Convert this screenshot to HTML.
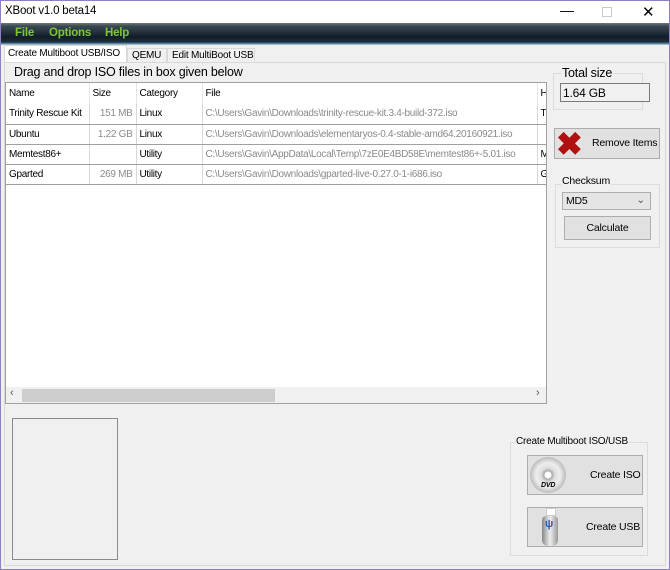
<!DOCTYPE html>
<html><head><style>
*{margin:0;padding:0;box-sizing:border-box}
body{width:670px;height:570px;position:relative;background:#f0f0f0;font-family:"Liberation Sans",sans-serif;font-size:10.5px;letter-spacing:-0.2px;color:#000;overflow:hidden}
.a{position:absolute;white-space:nowrap}
.btn{position:absolute;background:#e1e1e1;border:1px solid #adadad}
td{height:20px;border-right:1px solid #d8d8d8;border-bottom:1px solid #a0a0a0;padding:0 3px;white-space:nowrap;overflow:hidden;font-size:10px;letter-spacing:-0.3px}
.g{color:#8a8a8a}
</style></head><body>
<div class="a" style="left:0;top:0;width:670px;height:570px;border:1px solid #8f7fc8"></div>
<div class="a" style="left:1px;top:1px;width:668px;height:22px;background:#fff"></div>
<div class="a" style="left:5px;top:5px;font-size:11.5px">XBoot v1.0 beta14</div>
<div class="a" style="left:560px;top:2px;font-size:14px">&#8212;</div>
<div class="a" style="left:602px;top:7px;width:10px;height:10px;border:1px solid #ccc"></div>
<div class="a" style="left:642px;top:3px;font-size:15px">&#10005;</div>
<div class="a" style="left:1px;top:23px;width:668px;height:22px;background:linear-gradient(#777 0,#3a4a55 3px,#111d26 14px,#1c3040 19px,#6a9ab8 21px,#d0d8dc 22px)"></div>
<div class="a" style="left:15px;top:27px;font-size:11.5px;font-weight:bold;color:#7dc63a">File</div>
<div class="a" style="left:49px;top:27px;font-size:11.5px;font-weight:bold;color:#7dc63a">Options</div>
<div class="a" style="left:105px;top:27px;font-size:11.5px;font-weight:bold;color:#7dc63a">Help</div>
<!-- tabs -->
<div class="a" style="left:4px;top:45px;width:123px;height:18px;background:#fff;border:1px solid #d9d9d9;border-bottom:none;padding:2px 3px;font-size:10px">Create Multiboot USB/ISO</div>
<div class="a" style="left:127px;top:48px;width:40px;height:15px;background:#f0f0f0;border:1px solid #d9d9d9;padding:1px 4px;font-size:10px">QEMU</div>
<div class="a" style="left:167px;top:48px;width:88px;height:15px;background:#f0f0f0;border:1px solid #d9d9d9;padding:1px 4px;font-size:10px">Edit MultiBoot USB</div>
<div class="a" style="left:4px;top:62px;width:662px;height:504px;border:1px solid #d9d9d9;background:#f0f0f0"></div>
<div class="a" style="left:14px;top:65px;font-size:12.5px">Drag and drop ISO files in box given below</div>
<!-- list -->
<div class="a" style="left:5px;top:82px;width:542px;height:322px;background:#fff;border:1px solid #a0a0a0;overflow:hidden">
<table style="border-collapse:collapse;width:560px;table-layout:fixed">
<col style="width:83px"><col style="width:47px"><col style="width:66px"><col style="width:335px"><col style="width:29px">
<tr><td style="height:21px;border-bottom:none;border-right-color:#e5e5e5">Name</td><td style="border-bottom:none;border-right-color:#e5e5e5">Size</td><td style="border-bottom:none;border-right-color:#e5e5e5">Category</td><td style="border-bottom:none;border-right-color:#e5e5e5">File</td><td style="border-bottom:none">H</td></tr>
<tr><td>Trinity Rescue Kit</td><td class="g" style="text-align:right">151 MB</td><td>Linux</td><td class="g">C:\Users\Gavin\Downloads\trinity-rescue-kit.3.4-build-372.iso</td><td>T</td></tr>
<tr><td>Ubuntu</td><td class="g" style="text-align:right">1.22 GB</td><td>Linux</td><td class="g">C:\Users\Gavin\Downloads\elementaryos-0.4-stable-amd64.20160921.iso</td><td></td></tr>
<tr><td>Memtest86+</td><td></td><td>Utility</td><td class="g">C:\Users\Gavin\AppData\Local\Temp\7zE0E4BD58E\memtest86+-5.01.iso</td><td>M</td></tr>
<tr><td>Gparted</td><td class="g" style="text-align:right">269 MB</td><td>Utility</td><td class="g">C:\Users\Gavin\Downloads\gparted-live-0.27.0-1-i686.iso</td><td>G</td></tr>
</table>
<div class="a" style="left:0;top:304px;width:540px;height:16px;background:#f0f0f0"></div>
<div class="a" style="left:16px;top:306px;width:253px;height:13px;background:#cdcdcd"></div>
<div class="a" style="left:4px;top:304px;font-size:11px;color:#555">&#8249;</div>
<div class="a" style="left:530px;top:304px;font-size:11px;color:#555">&#8250;</div>
</div>
<!-- right -->
<div class="a" style="left:553px;top:73px;width:90px;height:37px;border:1px solid #dcdcdc"></div>
<div class="a" style="left:561px;top:66px;font-size:12.5px;background:#f0f0f0;padding:0 1px">Total size</div>
<div class="a" style="left:560px;top:83px;width:90px;height:19px;border:1px solid #7a7a7a;background:#f0f0f0;font-size:12px;padding:2px 2px">1.64 GB</div>
<div class="btn" style="left:554px;top:128px;width:106px;height:31px"></div>
<div class="a" style="left:556px;top:129px;font-size:32px;line-height:30px;color:#b01010;font-weight:bold">&#10006;</div>
<div class="a" style="left:592px;top:137px">Remove Items</div>
<div class="a" style="left:555px;top:184px;width:105px;height:64px;border:1px solid #dcdcdc"></div>
<div class="a" style="left:561px;top:175px;background:#f0f0f0;padding:0 1px">Checksum</div>
<div class="a" style="left:562px;top:192px;width:89px;height:18px;border:1px solid #adadad;background:#e5e5e5;padding:2px 3px">MD5<span style="position:absolute;right:5px;top:1px;color:#555">&#8964;</span></div>
<div class="btn" style="left:564px;top:216px;width:87px;height:24px;text-align:center;padding-top:5px">Calculate</div>
<!-- bottom -->
<div class="a" style="left:12px;top:418px;width:106px;height:142px;border:1px solid #8a8a8a"></div>
<div class="a" style="left:510px;top:442px;width:138px;height:114px;border:1px solid #dcdcdc"></div>
<div class="a" style="left:515px;top:436px;background:#f0f0f0;padding:0 1px;font-size:10px">Create Multiboot ISO/USB</div>
<div class="btn" style="left:527px;top:455px;width:116px;height:40px"></div>
<div class="a" style="left:530px;top:457px;width:36px;height:36px;border-radius:50%;background:radial-gradient(circle,#fff 0 3px,#aaa 4px,#ddd 7px,#eee 12px,#bbb 18px)"></div>
<div class="a" style="left:541px;top:482px;font-size:7px;font-weight:bold;font-style:italic">DVD</div>
<div class="a" style="left:590px;top:469px">Create ISO</div>
<div class="btn" style="left:527px;top:507px;width:116px;height:40px"></div>
<div class="a" style="left:546px;top:508px;width:10px;height:8px;background:#fff;border:1px solid #ccc"></div>
<div class="a" style="left:542px;top:516px;width:16px;height:30px;border-radius:4px 4px 6px 6px;background:linear-gradient(90deg,#888,#eee,#999)"></div>
<div class="a" style="left:545px;top:518px;font-size:11px;color:#2a5ab0;font-weight:bold">&#968;</div>
<div class="a" style="left:586px;top:521px">Create USB</div>
</body></html>
